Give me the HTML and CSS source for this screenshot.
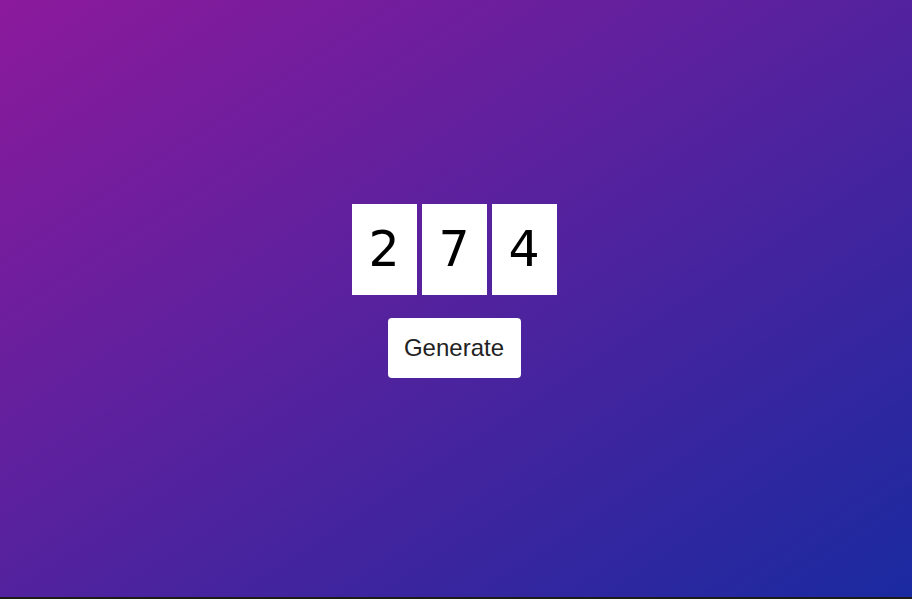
FILE: index.html
```html
<!DOCTYPE html>
<html lang="en">
<head>
<meta charset="utf-8">
<title>Generator</title>
<link rel="stylesheet" href="styles.css">
</head>
<body>
<main class="page">
  <div class="digits">
    <div class="digit">2</div>
    <div class="digit">7</div>
    <div class="digit">4</div>
  </div>
  <button class="generate" type="button">Generate</button>
</main>
</body>
</html>
```
FILE: styles.css
```css
html, body {
  margin: 0;
  padding: 0;
  background: #1c1c1c;
}
.page {
  height: 597px;
  background: linear-gradient(to bottom right, #8c1a9c, #1a2aa0);
  display: flex;
  flex-direction: column;
  align-items: center;
  justify-content: center;
  gap: 23px;
  padding: 0 4px 16px 0;
  box-sizing: border-box;
}
.digits {
  display: flex;
  gap: 5px;
}
.digit {
  width: 65px;
  height: 91px;
  background: #fff;
  display: flex;
  align-items: center;
  justify-content: center;
  font-family: "DejaVu Sans", sans-serif;
  font-size: 49px;
  color: #000;
}
.generate {
  font-family: "Liberation Sans", Arial, sans-serif;
  font-size: 24px;
  line-height: 28px;
  color: #222;
  background: #fff;
  border: none;
  border-radius: 4px;
  padding: 16px 16px;
  width: 133px;
  height: 60px;
  cursor: pointer;
}
```
